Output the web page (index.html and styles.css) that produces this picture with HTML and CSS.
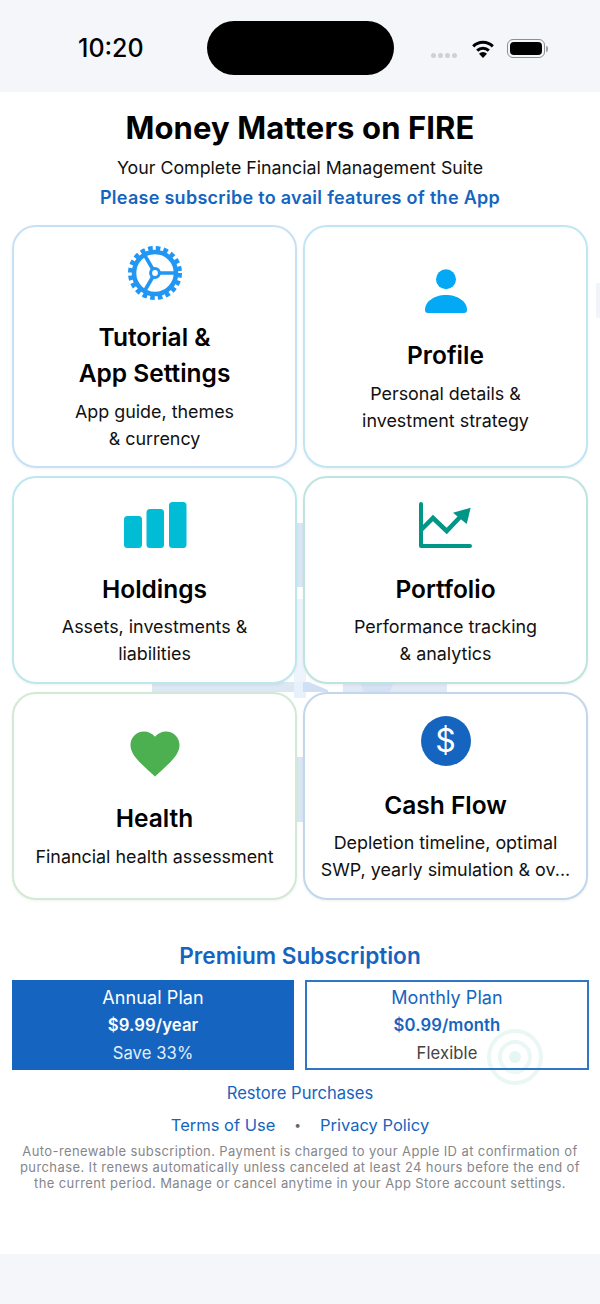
FILE: index.html
```html
<!DOCTYPE html>
<html lang="en">
  <head>
    <meta charset="UTF-8">
    <meta name="viewport" content="width=device-width, initial-scale=1.0">
    <title>Money Matters on FIRE</title>
    <link rel="stylesheet" href="styles.css">
  </head>
  <body>
    <div class="phone">
      <header class="status-bar">
        <span class="time">10:20</span>
        <div class="island"></div>
        <div class="status-icons">
          <div class="signal"><i></i><i></i><i></i><i></i></div>
          <svg class="wifi" width="24" height="18" viewBox="0 0 24 18">
            <path d="M12 18l-4-4.3a5.6 5.6 0 0 1 8 0z" fill="#000"/>
            <path d="M6.2 10.6a8.2 8.2 0 0 1 11.6 0" fill="none" stroke="#000" stroke-width="3"/>
            <path d="M2.2 6.4a13.8 13.8 0 0 1 19.6 0" fill="none" stroke="#000" stroke-width="3"/>
          </svg>
          <div class="battery"><div class="battery-fill"></div></div>
          <div class="battery-cap"></div>
        </div>
      </header>

      <main class="content">
        <svg class="watermark" width="600" height="1160" viewBox="0 0 600 1160">
          <rect x="596" y="191" width="4" height="35" fill="#f1f5f9"/>
          <rect x="294" y="431" width="12" height="64" fill="#d9e7f4"/>
          <rect x="294" y="507" width="12" height="85" fill="#edf4fb"/>
          <rect x="152" y="590" width="145" height="10" fill="#dbe7f2"/>
          <rect x="294" y="590" width="12" height="16" fill="#e6f1fc"/>
          <path d="M303 590h6l19 8v2h-25z" fill="#cfe0f5"/>
          <rect x="343" y="590" width="104" height="10" fill="#e1e8f6"/>
          <path d="M360 590h34l-4 10h-26z" fill="#d5e2f5"/>
          <rect x="294" y="665" width="12" height="65" fill="#d9e7f4"/>
          <g fill="none" stroke="#eaf7f5">
            <circle cx="515" cy="965" r="26" stroke-width="4"/>
            <circle cx="515" cy="965" r="15" stroke-width="4"/>
          </g>
          <circle cx="515" cy="965" r="6" fill="#e6f6f4"/>
        </svg>

        <h1 class="app-title">Money Matters on FIRE</h1>
        <p class="tagline">Your Complete Financial Management Suite</p>
        <p class="subscribe-note">Please subscribe to avail features of the App</p>

        <section class="cards">
          <a class="card card-settings">
            <div class="card-icon">
              <svg width="56" height="56" viewBox="0 0 56 56" fill="none" stroke="#2196f3">
                <circle cx="28" cy="28" r="24.5" stroke-width="5" stroke-dasharray="4.6 3.1"/>
                <circle cx="28" cy="28" r="21" stroke-width="4.6"/>
                <path d="M32 28H49M26 24.5L17 9M26 31.5L17 47" stroke-width="3.6"/>
                <circle cx="28" cy="28" r="4.4" stroke-width="3" fill="#fff"/>
              </svg>
            </div>
            <h2 class="card-title">Tutorial &amp;<br>App Settings</h2>
            <p class="card-desc">App guide, themes<br>&amp; currency</p>
          </a>
          <a class="card card-profile">
            <div class="card-icon">
              <svg width="56" height="56" viewBox="0 0 56 56" fill="#03a9f4">
                <circle cx="28" cy="16.3" r="10"/>
                <path d="M7 47C7 38 17 32 28 32S49 38 49 47Q49 50 46 50H10Q7 50 7 47Z"/>
              </svg>
            </div>
            <h2 class="card-title">Profile</h2>
            <p class="card-desc">Personal details &amp;<br>investment strategy</p>
          </a>
          <a class="card card-holdings">
            <div class="card-icon">
              <svg width="64" height="56" viewBox="0 0 64 56" fill="#00bcd4">
                <rect x="1" y="19" width="18" height="32" rx="3.5"/>
                <rect x="23.5" y="12" width="17.5" height="39" rx="3.5"/>
                <rect x="46" y="5" width="17.5" height="46" rx="3.5"/>
              </svg>
            </div>
            <h2 class="card-title">Holdings</h2>
            <p class="card-desc">Assets, investments &amp;<br>liabilities</p>
          </a>
          <a class="card card-portfolio">
            <div class="card-icon">
              <svg width="64" height="56" viewBox="0 0 64 56" fill="none" stroke="#009688">
                <path d="M7 7V49H56" stroke-width="4" stroke-linecap="round" stroke-linejoin="round"/>
                <path d="M7 33L19 21L32.7 34L48 18" stroke-width="4.5"/>
                <path d="M56.7 10.7L39 15.7L52.7 27Z" fill="#009688" stroke="none"/>
              </svg>
            </div>
            <h2 class="card-title">Portfolio</h2>
            <p class="card-desc">Performance tracking<br>&amp; analytics</p>
          </a>
          <a class="card card-health">
            <div class="card-icon">
              <svg width="56" height="56" viewBox="0.57 0.74 22.86 22.86" fill="#4caf50">
                <path d="M12 21.35l-1.45-1.32C5.4 15.36 2 12.28 2 8.5 2 5.42 4.42 3 7.5 3c1.74 0 3.41.81 4.5 2.09C13.09 3.81 14.76 3 16.5 3 19.58 3 22 5.42 22 8.5c0 3.78-3.4 6.86-8.55 11.54L12 21.35z"/>
              </svg>
            </div>
            <h2 class="card-title">Health</h2>
            <p class="card-desc">Financial health assessment</p>
          </a>
          <a class="card card-cash">
            <div class="card-icon">
              <div class="dollar">$</div>
            </div>
            <h2 class="card-title">Cash Flow</h2>
            <p class="card-desc">Depletion timeline, optimal<br>SWP, yearly simulation &amp; ov...</p>
          </a>
        </section>

        <section class="subscription">
          <h2 class="sub-title">Premium Subscription</h2>
          <div class="plans">
            <div class="plan plan-active">
              <div class="plan-name">Annual Plan</div>
              <div class="plan-price">$9.99/year</div>
              <div class="plan-note">Save 33%</div>
            </div>
            <div class="plan">
              <div class="plan-name">Monthly Plan</div>
              <div class="plan-price">$0.99/month</div>
              <div class="plan-note">Flexible</div>
            </div>
          </div>
          <a class="restore">Restore Purchases</a>
          <div class="legal-links">
            <a>Terms of Use</a>
            <span class="dot">•</span>
            <a>Privacy Policy</a>
          </div>
          <p class="fine-print">Auto-renewable subscription. Payment is charged to your Apple ID at confirmation of purchase. It renews automatically unless canceled at least 24 hours before the end of the current period. Manage or cancel anytime in your App Store account settings.</p>
        </section>
      </main>

      <footer class="home-bar"></footer>
    </div>
  </body>
</html>
```

FILE: styles.css
```css
* {
  box-sizing: border-box;
}
body {
  margin: 0;
  padding: 0;
  font-family: Inter, "Liberation Sans", sans-serif;
  color: #000;
  background: #f5f6fa;
}
h1, h2, p {
  margin: 0;
}
.phone {
  width: 600px;
  height: 1304px;
  display: flex;
  flex-direction: column;
  overflow: hidden;
}

/* status bar */
.status-bar {
  height: 92px;
  flex: none;
  display: flex;
  align-items: flex-start;
  background: #f5f6fa;
  position: relative;
}
.time {
  margin: 32px 0 0 78px;
  width: 129px;
  font-size: 25px;
  line-height: 32px;
  font-weight: 500;
}
.island {
  margin-top: 21px;
  width: 187px;
  height: 54px;
  border-radius: 27px;
  background: #000;
}
.status-icons {
  margin: 39px 0 0 37px;
  display: flex;
  align-items: center;
}
.signal {
  display: flex;
  gap: 2px;
  margin-top: 14px;
  margin-right: 14px;
}
.signal i {
  width: 5px;
  height: 5px;
  border-radius: 50%;
  background: #cfd0d4;
}
.wifi {
  margin-right: 12px;
}
.battery {
  width: 38px;
  height: 19px;
  border: 1.5px solid #8e8e90;
  border-radius: 6px;
  padding: 2px;
}
.battery-fill {
  width: 100%;
  height: 100%;
  background: #000;
  border-radius: 4px;
}
.battery-cap {
  width: 2px;
  height: 6px;
  margin-left: 1px;
  background: #a0a0a2;
  border-radius: 0 2px 2px 0;
}

/* main */
.content {
  flex: 1;
  position: relative;
  background: #fff;
  padding: 16px 12px 0;
}
.watermark {
  position: absolute;
  left: 0;
  top: 0;
}
.app-title {
  position: relative;
  font-size: 31px;
  line-height: 40px;
  font-weight: 700;
  letter-spacing: 0.1px;
  text-align: center;
}
.tagline {
  position: relative;
  margin-top: 7px;
  font-size: 17.8px;
  line-height: 26px;
  color: #111;
  text-align: center;
}
.subscribe-note {
  position: relative;
  margin-top: 4px;
  font-size: 18px;
  line-height: 26px;
  font-weight: 600;
  letter-spacing: 0.28px;
  color: #1565c0;
  text-align: center;
}

/* cards */
.cards {
  position: relative;
  margin-top: 14px;
  display: grid;
  grid-template-columns: 285px 285px;
  grid-template-rows: 243px 208px 208px;
  column-gap: 6px;
  row-gap: 8px;
}
.card {
  display: flex;
  flex-direction: column;
  align-items: center;
  justify-content: center;
  padding-top: 4px;
  background: #fff;
  border: 2px solid #ccc;
  border-radius: 24px;
  text-align: center;
  box-shadow: 0 1px 3px rgba(0, 0, 0, 0.06);
}
.card-settings {
  border-color: #c6e1f6;
}
.card-profile {
  border-color: #c0e6f4;
}
.card-holdings {
  border-color: #bde7ee;
}
.card-portfolio {
  border-color: #bee4de;
}
.card-health {
  border-color: #d2e9d3;
}
.card-cash {
  border-color: #c2d6ec;
}
.card-icon {
  height: 56px;
  display: flex;
  justify-content: center;
  align-items: center;
  margin-bottom: 18px;
}
.card-title {
  font-size: 24.5px;
  line-height: 36px;
  font-weight: 600;
}
.card-desc {
  margin-top: 6.5px;
  font-size: 17.9px;
  line-height: 27px;
  color: #111;
}
.dollar {
  width: 50px;
  height: 50px;
  border-radius: 50%;
  background: #1565c0;
  color: #fff;
  font-size: 32px;
  line-height: 50px;
  text-align: center;
}

/* subscription */
.subscription {
  position: relative;
  margin-top: 40px;
  text-align: center;
}
.sub-title {
  font-size: 22.6px;
  line-height: 32px;
  font-weight: 600;
  color: #1565c0;
}
.plans {
  margin-top: 8px;
  display: flex;
  gap: 11px;
}
.plan {
  flex: none;
  width: 284px;
  height: 90px;
  border: 2px solid #2f76c4;
  padding-top: 3px;
  color: #1565c0;
  font-size: 18px;
  letter-spacing: 0.1px;
}
.plan-active {
  width: 282px;
  background: #1565c0;
  border-color: #1565c0;
  color: #fff;
}
.plan-name {
  line-height: 26px;
}
.plan-price {
  line-height: 28px;
  font-size: 16.7px;
  font-weight: 600;
}
.plan-note {
  line-height: 28px;
  font-size: 16.6px;
  color: #444;
}
.plan-active .plan-note {
  color: #e3eefa;
}
.restore {
  display: block;
  margin-top: 12px;
  font-size: 16.6px;
  line-height: 22px;
  color: #1565c0;
}
.legal-links {
  margin-top: 10px;
  display: flex;
  justify-content: center;
  align-items: center;
  gap: 19px;
  font-size: 16.5px;
  line-height: 22px;
  color: #1565c0;
}
.dot {
  color: #666;
  font-size: 12px;
}
.fine-print {
  margin-top: 7px;
  font-size: 13px;
  line-height: 16px;
  letter-spacing: 0.4px;
  color: #86868a;
}

.home-bar {
  height: 50px;
  flex: none;
  background: #f5f6fa;
}
```
